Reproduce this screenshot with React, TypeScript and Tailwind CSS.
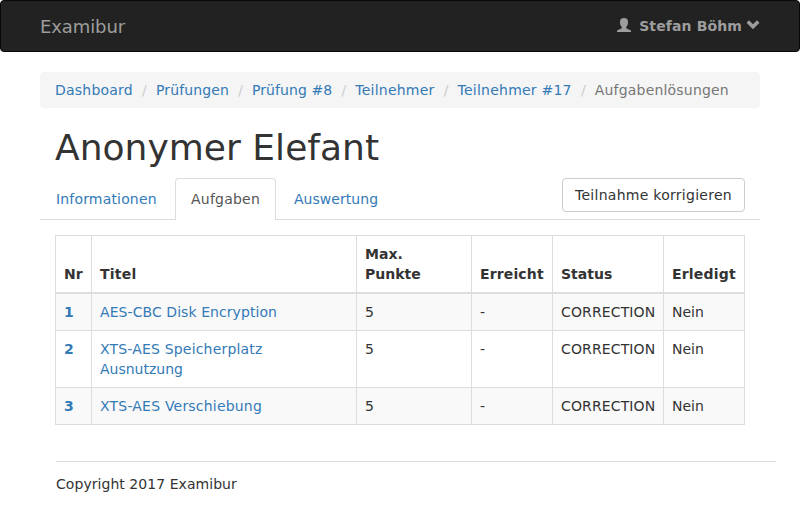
import React from "react";

const crumbs = [
  { name: "Dashboard", spacing: "tracking-[0.22px]" },
  { name: "Prüfungen", spacing: "tracking-[0.13px]" },
  { name: "Prüfung #8", spacing: "tracking-[0.08px]" },
  { name: "Teilnehmer", spacing: "tracking-[0.24px]" },
  { name: "Teilnehmer #17", spacing: "tracking-[0.23px]" },
];

const tasks = [
  { nr: 1, lines: [{ text: "AES-CBC Disk Encryption", spacing: "tracking-[0.07px]" }] },
  {
    nr: 2,
    lines: [
      { text: "XTS-AES Speicherplatz", spacing: "tracking-[0.18px]" },
      { text: "Ausnutzung", spacing: "tracking-normal" },
    ],
  },
  { nr: 3, lines: [{ text: "XTS-AES Verschiebung", spacing: "tracking-[0.2px]" }] },
];

const head = "border border-b-2 border-[#ddd] p-2 text-left align-bottom font-bold";
const cell = "border border-[#ddd] p-2 align-top";

function UserIcon() {
  return (
    <svg className="mt-[2px] h-[14px] w-[14px]" viewBox="0 0 14 14" fill="currentColor">
      <path d="M7 0C4.300 0 3 1.300 3 3.500v1.300c0 1.700.7 3.100 1.700 4.100v.8c0 .5-.2.800-.7 1L.9 11.900c-.6.2-.9.6-.9 1.100v1h14v-1c0-.5-.3-.9-.9-1.100L10 10.700c-.5-.2-.7-.5-.7-1v-.8c1-1 1.700-2.400 1.700-4.100V3.500C11 1.300 9.700 0 7 0z" />
    </svg>
  );
}

function ChevronIcon() {
  return (
    <svg className="mt-[2px] h-[14px] w-[14px]" viewBox="0 0 14 14" fill="currentColor">
      <path d="M3 2.300 7 6.300l4-4 2.500 2.500L7 11.300.5 4.800z" />
    </svg>
  );
}

export default function App() {
  return (
    <div className="h-[530px] overflow-hidden bg-white font-['DejaVu_Sans',sans-serif] text-[14px] leading-5 text-[#333]">
      <nav className="flex h-[52px] justify-between rounded border border-[#080808] bg-[#222] px-[39px] text-[#9d9d9d]">
        <a className="pt-4 text-[18px] tracking-[-0.1px]">Examibur</a>
        <a className="flex pt-[15px] font-bold">
          <UserIcon />
          <span className="ml-2 mr-1 tracking-[0.12px]">Stefan Böhm</span>
          <ChevronIcon />
        </a>
      </nav>
      <main className="mx-10">
        <ol className="mt-5 flex h-9 items-center rounded bg-[#f5f5f5] px-[15px]">
          {crumbs.map((crumb) => (
            <li key={crumb.name} className="flex text-[#337ab7]">
              <a className={crumb.spacing}>{crumb.name}</a>
              <span className="w-[23px] text-center text-[#ccc]">/</span>
            </li>
          ))}
          <li className="tracking-[0.19px] text-[#777]">Aufgabenlösungen</li>
        </ol>
        <h1 className="mt-5 px-[15px] text-[36px] leading-10 tracking-[0.03px]">Anonymer Elefant</h1>
        <div className="mt-[10px] flex h-[42px] border-b border-[#ddd] text-[#337ab7]">
          <a className="mr-[2px] w-[133px] px-4 py-[11px] tracking-[0.17px]">Informationen</a>
          <a className="mr-[2px] h-[42px] w-[101px] rounded-t border border-b-0 border-[#ddd] bg-white px-[15px] py-[10px] tracking-[0.22px] text-[#555]">Aufgaben</a>
          <a className="px-4 py-[11px] tracking-[0.04px]">Auswertung</a>
          <button className="ml-auto mr-[15px] h-[34px] w-[183px] whitespace-nowrap rounded border border-[#ccc] bg-white px-3 text-left tracking-[0.27px] text-[#333]">Teilnahme korrigieren</button>
        </div>
        <table className="mx-[15px] mt-[15px] w-[690px] table-fixed border-collapse border border-[#ddd]">
          <colgroup>
            <col className="w-[36px]" />
            <col className="w-[265px]" />
            <col className="w-[115px]" />
            <col className="w-[81px]" />
            <col className="w-[111px]" />
            <col className="w-[81px]" />
          </colgroup>
          <thead>
            <tr>
              <th className={head}>Nr</th>
              <th className={`${head} tracking-[0.25px]`}>Titel</th>
              <th className={head}>Max.<br />Punkte</th>
              <th className={`${head} tracking-[0.14px]`}>Erreicht</th>
              <th className={head}>Status</th>
              <th className={`${head} tracking-[0.2px]`}>Erledigt</th>
            </tr>
          </thead>
          <tbody>
            {tasks.map((task) => (
              <tr key={task.nr} className="odd:bg-[#f9f9f9]">
                <th className={`${cell} text-left font-bold text-[#337ab7]`}>{task.nr}</th>
                <td className={`${cell} text-[#337ab7]`}>
                  <a>
                    {task.lines.map((line) => (
                      <span key={line.text} className={`block ${line.spacing}`}>{line.text}</span>
                    ))}
                  </a>
                </td>
                <td className={cell}>5</td>
                <td className={cell}>-</td>
                <td className={`${cell} whitespace-nowrap tracking-[0.13px]`}>CORRECTION</td>
                <td className={cell}>Nein</td>
              </tr>
            ))}
          </tbody>
        </table>
        <footer className="ml-4 mt-9 w-[720px] border-t border-[#ddd] pt-3 tracking-[0.05px]">Copyright 2017 Examibur</footer>
      </main>
    </div>
  );
}
